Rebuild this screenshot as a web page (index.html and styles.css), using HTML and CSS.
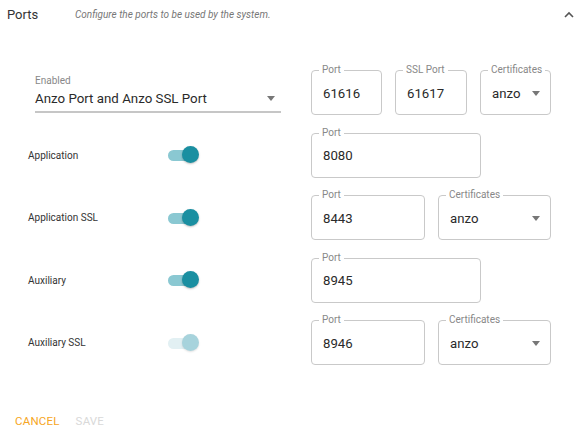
FILE: index.html
```html
<!DOCTYPE html>
<html>
<head>
<meta charset="utf-8">
<link rel="stylesheet" href="styles.css">
</head>
<body>
<div class="header">
  <div class="title">Ports</div>
  <div class="desc">Configure the ports to be used by the system.</div>
  <svg class="chev" width="10" height="7" viewBox="0 0 10 7"><path d="M1 6 L5 2 L9 6" fill="none" stroke="#555" stroke-width="1.6"/></svg>
</div>
<div class="content">
  <div class="row">
    <div class="left sel-cell">
      <div class="select">
        <div class="sel-label">Enabled</div>
        <div class="sel-value"><span>Anzo Port and Anzo SSL Port</span><span class="arrow"></span></div>
      </div>
    </div>
    <div class="right">
      <div class="field w71"><span class="legend">Port</span><span class="val">61616</span></div>
      <div class="field w72"><span class="legend">SSL Port</span><span class="val">61617</span></div>
      <div class="field w71 dd"><span class="legend">Certificates</span><span class="val">anzo</span><span class="arrow"></span></div>
    </div>
  </div>
  <div class="row">
    <div class="left tog-cell"><span class="lbl">Application</span><span class="toggle"><span class="track"></span><span class="thumb"></span></span></div>
    <div class="right">
      <div class="field w170"><span class="legend">Port</span><span class="val">8080</span></div>
    </div>
  </div>
  <div class="row">
    <div class="left tog-cell"><span class="lbl">Application SSL</span><span class="toggle"><span class="track"></span><span class="thumb"></span></span></div>
    <div class="right">
      <div class="field w114"><span class="legend">Port</span><span class="val">8443</span></div>
      <div class="field w113 dd"><span class="legend">Certificates</span><span class="val">anzo</span><span class="arrow"></span></div>
    </div>
  </div>
  <div class="row">
    <div class="left tog-cell"><span class="lbl">Auxiliary</span><span class="toggle"><span class="track"></span><span class="thumb"></span></span></div>
    <div class="right">
      <div class="field w170"><span class="legend">Port</span><span class="val">8945</span></div>
    </div>
  </div>
  <div class="row">
    <div class="left tog-cell"><span class="lbl">Auxiliary SSL</span><span class="toggle disabled"><span class="track"></span><span class="thumb"></span></span></div>
    <div class="right">
      <div class="field w114"><span class="legend">Port</span><span class="val">8946</span></div>
      <div class="field w113 dd"><span class="legend">Certificates</span><span class="val">anzo</span><span class="arrow"></span></div>
    </div>
  </div>
</div>
<div class="actions">
  <span class="btn cancel">CANCEL</span>
  <span class="btn save">SAVE</span>
</div>
</body>
</html>
```
FILE: styles.css
```css
* { box-sizing: border-box; }
body {
  margin: 0;
  font-family: Roboto, "Liberation Sans", sans-serif;
  color: #333;
  background: #fff;
  width: 580px;
  height: 435px;
  overflow: hidden;
}
.header {
  display: flex;
  align-items: center;
  height: 28px;
  padding-left: 7px;
  padding-right: 6px;
}
.title {
  width: 68px;
  font-size: 13px;
  color: #333;
}
.desc {
  flex: 1;
  font-size: 10px;
  font-style: italic;
  color: #777;
}
.chev { display: block; }
.content {
  padding-top: 42px;
  display: flex;
  flex-direction: column;
  gap: 17.5px;
}
.row {
  display: flex;
  height: 45px;
}
.left {
  width: 311px;
  display: flex;
  align-items: center;
}
.sel-cell { padding-left: 35px; }
.select {
  width: 246px;
  margin-top: 2px;
}
.sel-label {
  font-size: 10px;
  color: #888;
  line-height: 12px;
}
.sel-value {
  display: flex;
  align-items: center;
  justify-content: space-between;
  font-size: 13.3px;
  color: #2a2a2a;
  height: 26px;
  padding-right: 6px;
  border-bottom: 2px solid #c6c6c6;
}
.arrow {
  width: 0;
  height: 0;
  border-left: 4.5px solid transparent;
  border-right: 4.5px solid transparent;
  border-top: 5px solid #777;
}
.tog-cell { padding-left: 28px; }
.lbl {
  width: 140px;
  font-size: 10px;
  color: #333;
}
.toggle {
  position: relative;
  width: 31px;
  height: 18px;
  display: inline-block;
}
.track {
  position: absolute;
  left: 0;
  top: 4px;
  width: 28px;
  height: 11px;
  border-radius: 6px;
  background: #8ac8d2;
}
.thumb {
  position: absolute;
  right: 0;
  top: 0;
  width: 17px;
  height: 17px;
  border-radius: 50%;
  background: #1a8fa1;
  box-shadow: 0 1px 2px rgba(0,0,0,0.25);
}
.toggle.disabled .track { background: #e2f0f3; }
.toggle.disabled .thumb { background: #a7d3dc; box-shadow: 0 1px 2px rgba(0,0,0,0.12); }
.right {
  display: flex;
  gap: 13px;
}
.field {
  position: relative;
  height: 45px;
  border: 1px solid #c9c9c9;
  border-radius: 4px;
  display: flex;
  align-items: center;
  padding: 1px 11px 0 11px;
}
.field .legend {
  position: absolute;
  top: -7px;
  left: 7px;
  padding: 0 3px;
  background: #fff;
  font-size: 10px;
  line-height: 12px;
  color: #888;
}
.field .val {
  font-size: 13.2px;
  color: #2a2a2a;
}
.field.dd { justify-content: space-between; padding-right: 10px; }
.w71 { width: 71px; }
.w72 { width: 72px; }
.w170 { width: 170px; }
.w114 { width: 114px; }
.w113 { width: 113px; }
.actions {
  display: flex;
  gap: 16px;
  padding-left: 15px;
  padding-top: 49px;
}
.btn {
  font-size: 11.5px;
  letter-spacing: 0.2px;
}
.cancel { color: #f6a623; }
.save { color: #d9d9d9; }
```
